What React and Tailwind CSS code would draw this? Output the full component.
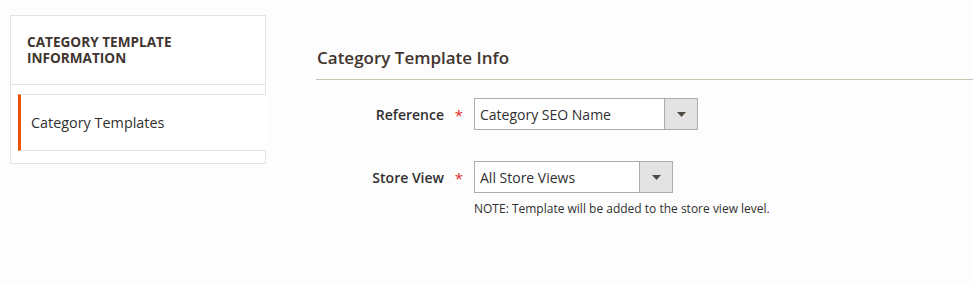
const SelectBox = ({ value, width }) => (
  <div className={`flex h-[32px] border border-[#adadad] bg-white ${width}`}>
    <div className="flex-1 flex items-center pl-[5px] text-[14px] text-[#303030] truncate">{value}</div>
    <div className="w-[33px] flex items-center justify-center bg-[#e3e3e3] border-l border-[#adadad]">
      <svg width="9" height="5" viewBox="0 0 9 5">
        <path d="M0 0h9L4.5 5z" fill="#514943" />
      </svg>
    </div>
  </div>
);

const Field = ({ label, value, width, note, className = "" }) => (
  <div className={className}>
    <div className="flex items-center">
      <label className="w-[128px] text-right text-[14px] font-semibold text-[#303030]">{label}</label>
      <span className="w-[30px] text-center text-[#e02b27] text-[15px] leading-none pt-[3px]">*</span>
      <SelectBox value={value} width={width} />
    </div>
    {note && (
      <p className="ml-[158px] mt-[8px] text-[12px] leading-4 text-[#303030]">{note}</p>
    )}
  </div>
);

export default function App() {
  return (
    <div
      className="h-[285px] w-[973px] bg-[#fdfdfd] flex items-start pt-[15px] pl-[10px]"
      style={{ fontFamily: '"Open Sans", "Liberation Sans", sans-serif' }}
    >
      <aside className="w-[256px] border border-[#e3e3e3] bg-white pb-[12px]">
        <div className="pl-[16px] pr-[40px] py-[18px] border-b border-[#e3e3e3] text-[13.6px] leading-4 font-bold uppercase text-[#41362f]">
          Category Template Information
        </div>
        <div className="mt-[9px] ml-[7px] -mr-px border-l-[3px] border-l-[#eb5202] border-y border-y-[#e3e3e3] bg-white">
          <a className="block pl-[10px] py-[19px] text-[14.4px] leading-[17px] text-[#303030]">Category Templates</a>
        </div>
      </aside>

      <main className="ml-[50px] flex-1 pt-[33px]">
        <h2 className="text-[17px] leading-5 font-semibold text-[#41362f] pl-px pb-[11px] border-b border-[#cac3b4]">
          Category Template Info
        </h2>
        <Field className="mt-[18px]" label="Reference" value="Category SEO Name" width="w-[224px]" />
        <Field
          className="mt-[31px]"
          label="Store View"
          value="All Store Views"
          width="w-[199px]"
          note="NOTE: Template will be added to the store view level."
        />
      </main>
    </div>
  );
}
